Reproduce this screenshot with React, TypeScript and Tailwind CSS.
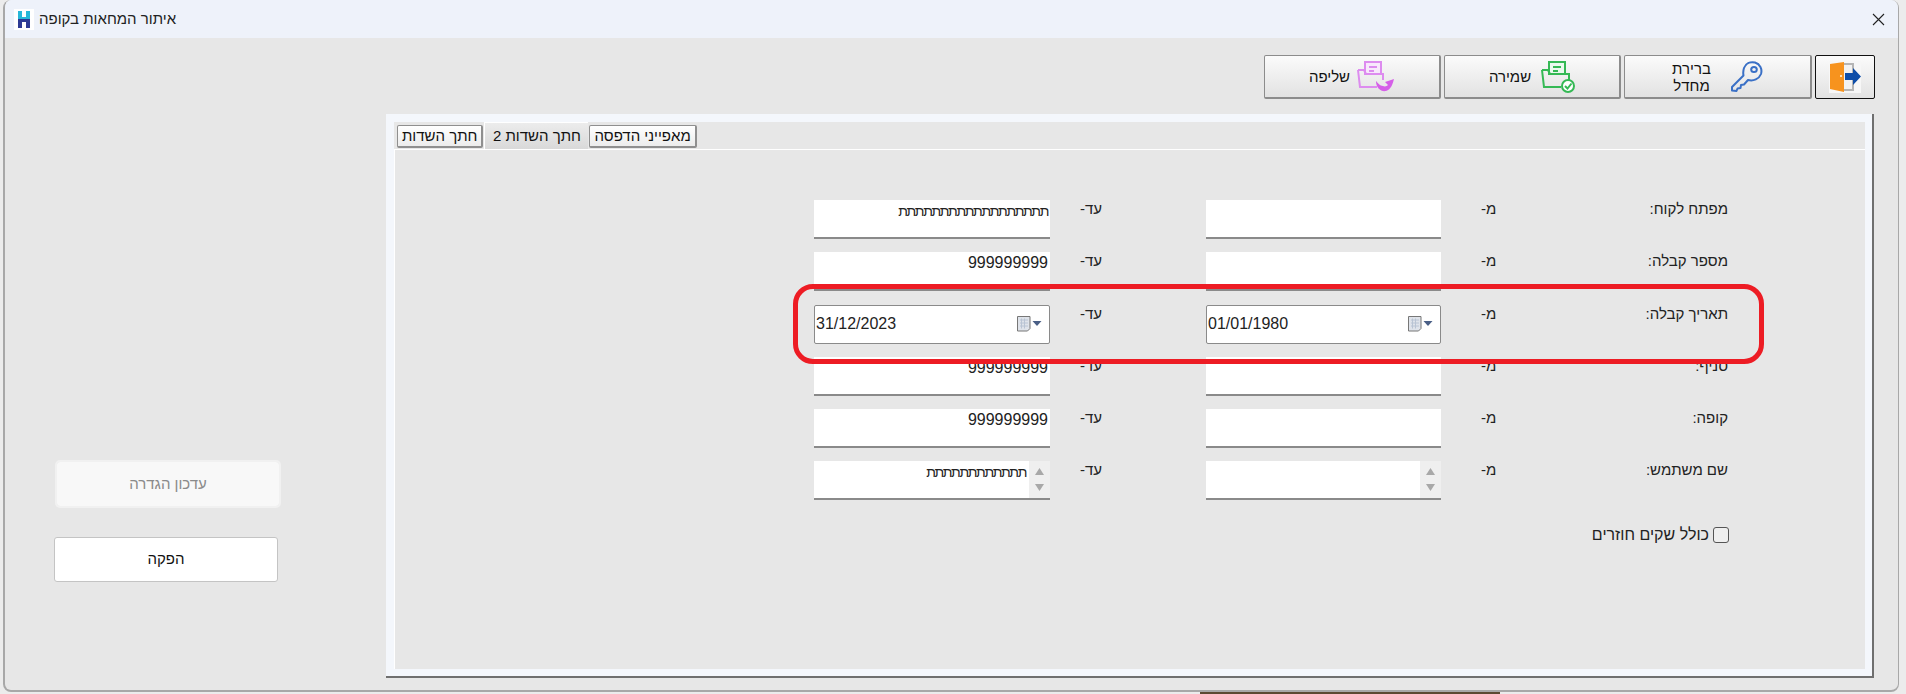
import type { ReactNode } from "react";

const font = "font-['Liberation_Sans',sans-serif]";

const rows = [
  { label: "מפתח לקוח:", to: "תתתתתתתתתתתתתתתתתת", kind: "text" },
  { label: "מספר קבלה:", to: "999999999", kind: "text" },
  { label: "תאריך קבלה:", from: "01/01/1980", to: "31/12/2023", kind: "date" },
  { label: "סניף:", to: "999999999", kind: "text" },
  { label: "קופה:", to: "999999999", kind: "text" },
  { label: "שם משתמש:", to: "תתתתתתתתתתתת", kind: "spin" }
];

function CalendarIcon() {
  return (
    <svg width="25" height="16" viewBox="0 0 25 16">
      <path d="M.5.5h12.5v12l-2.5 2.500H.5z" fill="#dfe3ea" stroke="#777" />
      <path d="M3 4h8M3 7h8M3 10h8M4.500 2.500v10M7.500 2.500v10" stroke="#b9c4d4" fill="none" />
      <path d="M15.500 5h9l-4.500 5z" fill="#4a5f86" />
    </svg>
  );
}

function Field({ value, kind }: { value?: string; kind: string }) {
  if (kind === "date") {
    return (
      <div className="flex h-[39px] items-center justify-between rounded-[2px] border border-[#8a8a8a] bg-white pr-[7px] pl-[1px] text-[16px] text-[#222]">
        <span>{value}</span>
        <CalendarIcon />
      </div>
    );
  }
  const hebrew = value && !/^\d/.test(value);
  return (
    <div className="flex h-[39px] justify-end border-b-2 border-[#8a8a8a] bg-white leading-[22px] text-[#222]" dir="ltr">
      <span className={hebrew ? "pr-[2px] text-[14px] tracking-[-1.350px]" : "pr-[2px] text-[16px]"} dir="rtl">
        {value}
      </span>
      {kind === "spin" && (
        <span className="ml-[1px] flex w-[21px] flex-col items-center justify-center gap-[9px] bg-[#efefef]">
          <svg width="9" height="7" viewBox="0 0 9 7"><path d="M4.500 0L9 7H0z" fill="#a8a8a8" /></svg>
          <svg width="9" height="7" viewBox="0 0 9 7"><path d="M0 0h9L4.500 7z" fill="#a8a8a8" /></svg>
        </span>
      )}
    </div>
  );
}

function FilterRow({ label, from, to, kind }: { label: string; from?: string; to?: string; kind: string }) {
  return (
    <div className="grid h-[52.300px] grid-cols-[419px_236px_156px_235px_287px] text-[15px] leading-[18px] text-[#222]">
      <div />
      <Field value={to} kind={kind} />
      <div className="pl-[30px]" dir="ltr"><span dir="rtl">עד-</span></div>
      <Field value={from} kind={kind} />
      <div className="flex justify-between pl-[40px]" dir="ltr">
        <span dir="rtl">מ-</span>
        <span dir="rtl">{label}</span>
      </div>
    </div>
  );
}

function ToolButton({ children, dark, className }: { children: ReactNode; dark?: boolean; className: string }) {
  return (
    <div
      className={`flex h-[44px] items-center justify-center rounded-[2px] border bg-gradient-to-b from-[#fbfbfb] to-[#e2e2e2] text-[15px] leading-[17px] text-[#111] ${
        dark ? "border-[#111]" : "border-[#8c8c8c] border-b-2 border-r-2"
      } ${className}`}
    >
      {children}
    </div>
  );
}

function Tab({ label, active }: { label: string; active?: boolean }) {
  if (active) {
    return (
      <div className="flex h-[27px] w-[104px] items-center justify-center border-t border-l border-white bg-gradient-to-b from-[#ececec] to-[#d9d9d9] text-[15px] text-[#111]" dir="rtl">
        {label}
      </div>
    );
  }
  return (
    <div className="mb-[1px] flex h-[23px] items-center justify-center rounded-[2px] border border-[#8f8f8f] border-b-2 border-r-2 bg-gradient-to-b from-white to-[#ececec] px-[4px] text-[15px] text-[#111]" dir="rtl">
      {label}
    </div>
  );
}

function KeyIcon() {
  return (
    <svg width="32" height="31" viewBox="0 0 32 31" fill="none" stroke="#3a70c6" strokeWidth="2" strokeLinejoin="round">
      <path d="M12.500 14.500L1 26v3.500l4.500.5 1-2.500 3-.5.5-3 3-.5 4-4.500c5.500 1.500 11-1 13-6 1.500-5-1-10-6-11.500-5-1-9.500 1-11 5.500-1 3-1 5-.500 7.500z" />
      <ellipse cx="23" cy="8.500" rx="2.800" ry="2.500" />
    </svg>
  );
}

function SaveIcon() {
  return (
    <svg width="34" height="32" viewBox="0 0 34 32" fill="none" stroke="#35b955" strokeWidth="2">
      <path d="M8 14V1h16v13" fill="#eafaee" />
      <path d="M12 6h8M12 10h5" />
      <path d="M1 9h6l2 4h19v7M1 9l2 17h17" />
      <circle cx="27" cy="25" r="6" fill="#fff" />
      <path d="M24 25l2.500 2.500 4-5" />
    </svg>
  );
}

function RestoreIcon() {
  return (
    <svg width="38" height="32" viewBox="0 0 38 32" fill="none" stroke="#dd8cef" strokeWidth="2">
      <path d="M8 14V1h16v13" fill="#f8e8fc" />
      <path d="M12 6h8M12 10h5" />
      <path d="M1 9h6l2 4h17v6M1 9l2 17h17" />
      <path d="M19 20c0 7 5 11 10 10 5-1 7-8 8-12l-9 3 3 3c-1 1-3 2-5 1-3 0-5-3-7-5z" fill="#d55fe8" stroke="none" />
    </svg>
  );
}

function DoorIcon() {
  return (
    <svg width="32" height="32" viewBox="0 0 32 32">
      <rect width="32" height="32" fill="#f7f7f7" />
      <path d="M14 3h10v26H14" fill="#f2f2f2" stroke="#b5b5b5" strokeWidth="2" />
      <path d="M1 3l14-2v30L1 28z" fill="#f7931e" />
      <rect x="11" y="14" width="2" height="2" fill="#ffe3b8" />
      <path d="M16 12h8V7l8 8.500-8 8.500v-5h-8z" fill="#0f4ea8" />
    </svg>
  );
}

export default function App() {
  return (
    <div className={`relative h-[694px] w-[1906px] overflow-hidden bg-[#ececec] pl-[3px] ${font}`}>
      <div className="flex h-[692px] w-[1896px] flex-col overflow-hidden rounded-t-[8px] rounded-b-[8px] border-r border-b-2 border-l-2 border-[#a8a8a8] bg-[#e7e7e7]">
        <div className="flex h-[38px] shrink-0 items-center justify-between bg-[#eef2fa] pr-[13px] pl-[9px]">
          <div className="flex items-center gap-[5px]">
            <svg width="20" height="21" viewBox="0 0 20 21">
              <rect width="20" height="21" fill="#fff" />
              <path d="M4 2h4v6h4V2h4v8H4z" fill="#27b7d8" />
              <path d="M4 10h12v9h-4v-6H8v6H4z" fill="#2d3a94" />
            </svg>
            <span className="text-[15px] text-[#222]" dir="rtl">איתור המחאות בקופה</span>
          </div>
          <svg width="13" height="13" viewBox="0 0 13 13" stroke="#222" strokeWidth="1.100">
            <path d="M1 1l11 11M12 1L1 12" />
          </svg>
        </div>

        <div className="flex flex-1">
          <div className="w-[381px] shrink-0 pt-[424px]">
            <div className="ml-[52px] flex h-[44px] w-[222px] items-center justify-center rounded-[3px] bg-[#f8f8f8] text-[15px] text-[#8a8a8a] outline-2 outline-[#f1f1f1]" dir="rtl">
              עדכון הגדרה
            </div>
            <div className="mt-[31px] ml-[49px] flex h-[45px] w-[224px] items-center justify-center rounded-[3px] border border-[#c4c4c4] bg-white text-[15px] text-[#111]" dir="rtl">
              הפקה
            </div>
          </div>

          <div className="flex-1">
            <div className="flex justify-end gap-[3px] pt-[17px] pr-[23px]">
              <ToolButton className="w-[177px] gap-[7px]">
                <span dir="rtl">שליפה</span>
                <RestoreIcon />
              </ToolButton>
              <ToolButton className="w-[177px] gap-[10px]">
                <span dir="rtl">שמירה</span>
                <SaveIcon />
              </ToolButton>
              <ToolButton className="w-[188px] gap-[20px]">
                <span className="text-center" dir="rtl">ברירת<br />מחדל</span>
                <KeyIcon />
              </ToolButton>
              <ToolButton dark className="w-[60px]">
                <DoorIcon />
              </ToolButton>
            </div>

            <div className="mt-[15px] flex h-[564px] w-[1488px] flex-col border-r-2 border-b-2 border-[#6f6f6f] bg-[#f4f7fc] p-[8px] pr-[7px] pb-[7px]">
              <div className="flex h-[27px] shrink-0 items-end gap-[1px] bg-[#e7e7e7] pl-[3px]">
                <Tab label="חתך השדות" />
                <Tab label="חתך השדות 2" active />
                <Tab label="מאפייני הדפסה" />
              </div>
              <div className="flex-1 border-t border-l border-white bg-[#e7e7e7] pt-[50px]">
                {rows.map((row) => (
                  <FilterRow key={row.label} {...row} />
                ))}
                <div className="mt-[9px] flex items-center justify-end gap-[4px] pr-[136px] text-[16px] text-[#222]" dir="ltr">
                  <span dir="rtl">כולל שקים חוזרים</span>
                  <span className="h-[16px] w-[16px] rounded-[3px] border border-[#555] bg-[#efefef]" />
                </div>
              </div>
            </div>
          </div>
        </div>
      </div>

      <div className="flex h-[2px] pl-[1197px]">
        <div className="h-[2px] w-[300px] bg-[#5c4a33]" />
      </div>

      {/* red marker drawn over the date row */}
      <div className="absolute top-[284px] left-[793px] h-[80px] w-[971px] rounded-[20px] border-[5px] border-[#ed1c24]" />
    </div>
  );
}
